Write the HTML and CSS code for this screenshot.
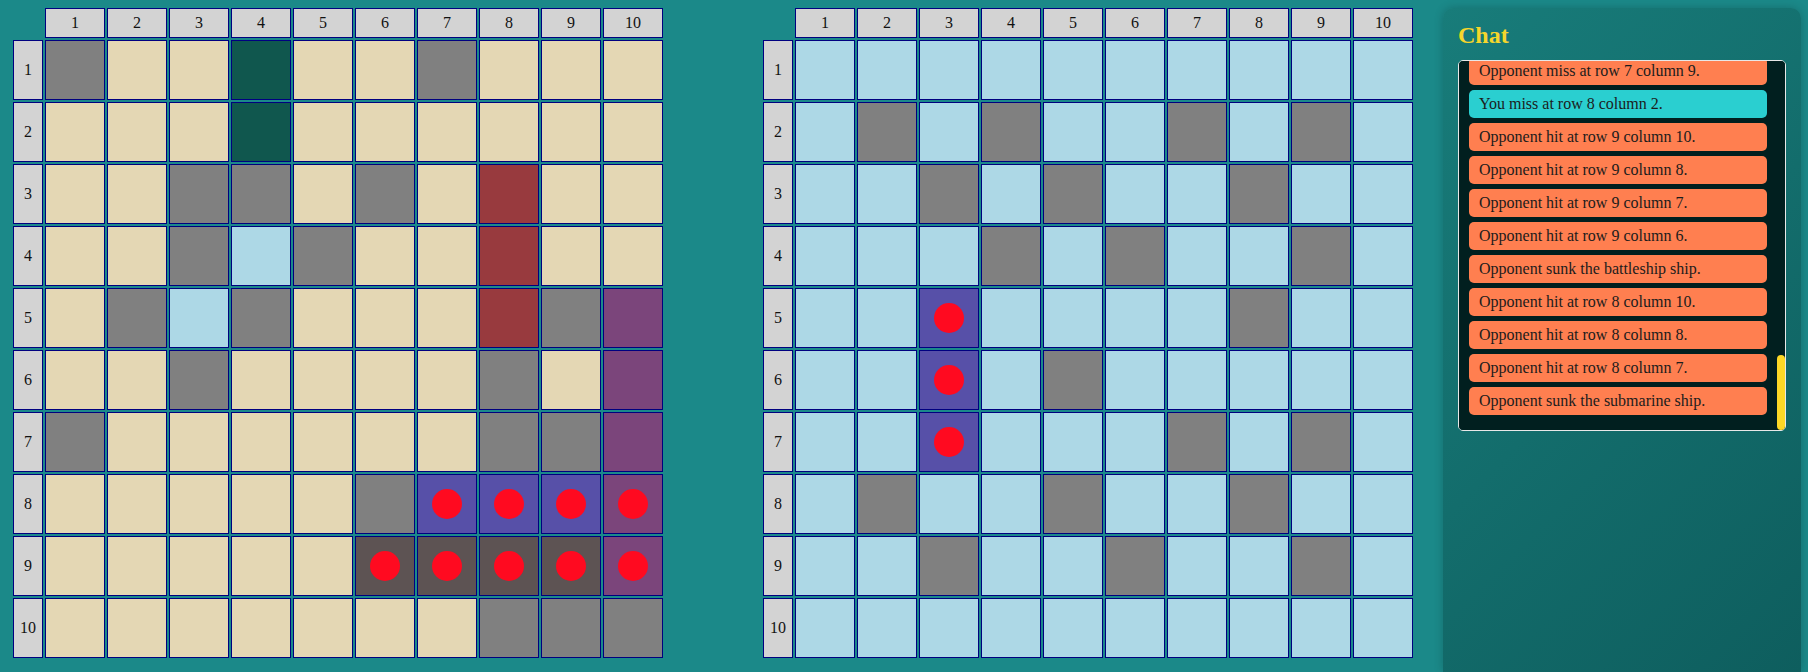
FILE: index.html
```html
<!DOCTYPE html>
<html lang="en">
<head>
    <meta charset="UTF-8">
    <meta name="viewport" content="width=device-width, initial-scale=1.0">
    <title>Battleship</title>
    <link rel="stylesheet" href="styles.css">
</head>
<body>
    <div class="game">
        <div class="board" id="my-board"></div>
        <div class="board enemy" id="enemy-board"></div>

        <div class="chat">
            <h2>Chat</h2>
            <div class="log-wrap">
                <ul class="log" id="log">
                    <li class="msg you">Game started. You go first.</li>
                    <li class="msg you">You miss at row 2 column 2.</li>
                    <li class="msg">Opponent miss at row 1 column 1.</li>
                    <li class="msg you">You miss at row 2 column 4.</li>
                    <li class="msg">Opponent miss at row 3 column 3.</li>
                    <li class="msg you">You miss at row 3 column 5.</li>
                    <li class="msg">Opponent miss at row 5 column 2.</li>
                    <li class="msg you">You miss at row 4 column 4.</li>
                    <li class="msg">Opponent miss at row 1 column 7.</li>
                    <li class="msg you">You miss at row 2 column 7.</li>
                    <li class="msg">Opponent miss at row 4 column 5.</li>
                    <li class="msg you">You hit at row 5 column 3.</li>
                    <li class="msg you">You hit at row 6 column 3.</li>
                    <li class="msg you">You hit at row 7 column 3.</li>
                    <li class="msg you">You miss at row 8 column 5.</li>
                    <li class="msg">Opponent miss at row 6 column 8.</li>
                    <li class="msg you">You miss at row 3 column 8.</li>
                    <li class="msg">Opponent miss at row 3 column 6.</li>
                    <li class="msg you">You miss at row 4 column 6.</li>
                    <li class="msg">Opponent miss at row 7 column 1.</li>
                    <li class="msg you">You miss at row 2 column 9.</li>
                    <li class="msg">Opponent miss at row 5 column 4.</li>
                    <li class="msg you">You miss at row 4 column 9.</li>
                    <li class="msg">Opponent miss at row 10 column 8.</li>
                    <li class="msg you">You miss at row 5 column 8.</li>
                    <li class="msg">Opponent miss at row 6 column 3.</li>
                    <li class="msg you">You miss at row 6 column 5.</li>
                    <li class="msg">Opponent miss at row 4 column 3.</li>
                    <li class="msg you">You miss at row 7 column 7.</li>
                    <li class="msg">Opponent hit at row 9 column 9.</li>
                    <li class="msg">Opponent miss at row 10 column 9.</li>
                    <li class="msg you">You miss at row 7 column 9.</li>
                    <li class="msg">Opponent miss at row 3 column 4.</li>
                    <li class="msg you">You miss at row 8 column 8.</li>
                    <li class="msg">Opponent hit at row 8 column 9.</li>
                    <li class="msg">Opponent miss at row 10 column 10.</li>
                    <li class="msg you">You miss at row 9 column 3.</li>
                    <li class="msg">Opponent miss at row 5 column 9.</li>
                    <li class="msg you">You miss at row 9 column 6.</li>
                    <li class="msg">Opponent miss at row 8 column 6.</li>
                    <li class="msg you">You miss at row 9 column 9.</li>
                    <li class="msg">Opponent miss at row 7 column 8.</li>
                    <li class="msg you">You miss at row 3 column 3.</li>
                    <li class="msg">Opponent miss at row 7 column 9.</li>
                    <li class="msg you">You miss at row 8 column 2.</li>
                    <li class="msg">Opponent hit at row 9 column 10.</li>
                    <li class="msg">Opponent hit at row 9 column 8.</li>
                    <li class="msg">Opponent hit at row 9 column 7.</li>
                    <li class="msg">Opponent hit at row 9 column 6.</li>
                    <li class="msg">Opponent sunk the battleship ship.</li>
                    <li class="msg">Opponent hit at row 8 column 10.</li>
                    <li class="msg">Opponent hit at row 8 column 8.</li>
                    <li class="msg">Opponent hit at row 8 column 7.</li>
                    <li class="msg">Opponent sunk the submarine ship.</li>
                </ul>
                <div class="thumb"></div>
            </div>
        </div>
    </div>

    <script>
        // . water, o miss, w open sea, T/R/P/B/D ships, b/p/d = ship that was hit
        const myBoard = [
            'o..T..o...',
            '...T......',
            '..oo.o.R..',
            '..owo..R..',
            '.owo...RoP',
            '..o....o.P',
            'o......ooP',
            '.....obbbp',
            '.....ddddp',
            '.......ooo'
        ];
        const enemyBoard = [
            'wwwwwwwwww',
            'wowowwowow',
            'wwowowwoww',
            'wwwowowwow',
            'wwbwwwwoww',
            'wwbwowwwww',
            'wwbwwwowow',
            'wowwowwoww',
            'wwowwowwow',
            'wwwwwwwwww'
        ];
        const kinds = {
            '.': 'water', 'o': 'miss', 'w': 'sea',
            'T': 'teal', 'R': 'red', 'P': 'purple', 'B': 'blue', 'D': 'dark',
            'b': 'blue hit', 'p': 'purple hit', 'd': 'dark hit'
        };

        function buildBoard(el, rows) {
            const corner = document.createElement('div');
            corner.className = 'corner';
            el.appendChild(corner);
            for (let c = 1; c <= 10; c++) {
                const head = document.createElement('div');
                head.className = 'cell head';
                head.textContent = c;
                el.appendChild(head);
            }
            rows.forEach((row, r) => {
                const head = document.createElement('div');
                head.className = 'cell head';
                head.textContent = r + 1;
                el.appendChild(head);
                for (const ch of row) {
                    const cell = document.createElement('div');
                    cell.className = 'cell ' + kinds[ch];
                    el.appendChild(cell);
                }
            });
        }

        buildBoard(document.getElementById('my-board'), myBoard);
        buildBoard(document.getElementById('enemy-board'), enemyBoard);

        // keep the newest message in view
        const log = document.getElementById('log');
        log.scrollTop = log.scrollHeight;
    </script>
</body>
</html>
```

FILE: styles.css
```css
html, body {
    overflow: hidden;
}
body {
    margin: 0;
    background-color: #1b8989;
    font-family: "Liberation Serif", "Times New Roman", serif;
    font-size: 16px;
}
.game {
    display: flex;
    align-items: flex-start;
    padding: 8px 0 0 13px;
}
.board {
    display: grid;
    grid-template-columns: 30px repeat(10, 60px);
    grid-template-rows: 30px repeat(10, 60px);
    gap: 2px;
}
.board.enemy {
    margin-left: 100px;
    margin-right: 30px;
}
.cell {
    box-sizing: border-box;
    border: 1px solid #000080;
    display: flex;
    align-items: center;
    justify-content: center;
}
.head {
    background-color: #d3d3d3;
    color: #111;
}
.water {
    background-color: #e4d7b4;
}
.miss {
    background-color: #808080;
}
.sea {
    background-color: #add8e6;
}
.teal {
    background-color: #10574e;
}
.red {
    background-color: #983a3e;
}
.purple {
    background-color: #7b457b;
}
.blue {
    background-color: #5750a8;
}
.dark {
    background-color: #5d5353;
}
.hit::after {
    content: "";
    width: 30px;
    height: 30px;
    border-radius: 50%;
    background-color: #ff0a20;
}

.chat {
    width: 358px;
    height: 664px;
    box-sizing: border-box;
    padding: 14px 15px;
    background: linear-gradient(135deg, #187c7a, #0e5e5e);
    border-radius: 10px 10px 0 0;
    box-shadow: 0 0 10px rgba(0, 0, 0, 0.2);
}
.chat h2 {
    margin: 0 0 11px;
    font-size: 24px;
    line-height: 27px;
    color: #f6d62c;
}
.log-wrap {
    position: relative;
}
.log {
    height: 371px;
    box-sizing: border-box;
    margin: 0;
    padding: 10px 18px 10px 10px;
    list-style: none;
    background-color: #011f1f;
    border: 1px solid #e8e8e8;
    border-radius: 5px;
    overflow-y: auto;
    scrollbar-width: none;
}
.log::-webkit-scrollbar {
    display: none;
}
/* yellow scroll thumb, the log is always scrolled to the newest message */
.thumb {
    position: absolute;
    right: 1px;
    bottom: 1px;
    width: 8px;
    height: 75px;
    border-radius: 4px;
    background-color: #fdd826;
}
.msg {
    padding: 5px 10px;
    margin-bottom: 5px;
    line-height: 18px;
    border-radius: 5px;
    background-color: #ff7f50;
    color: #1c1c1c;
}
.msg.you {
    background-color: #2acfd0;
}
```
